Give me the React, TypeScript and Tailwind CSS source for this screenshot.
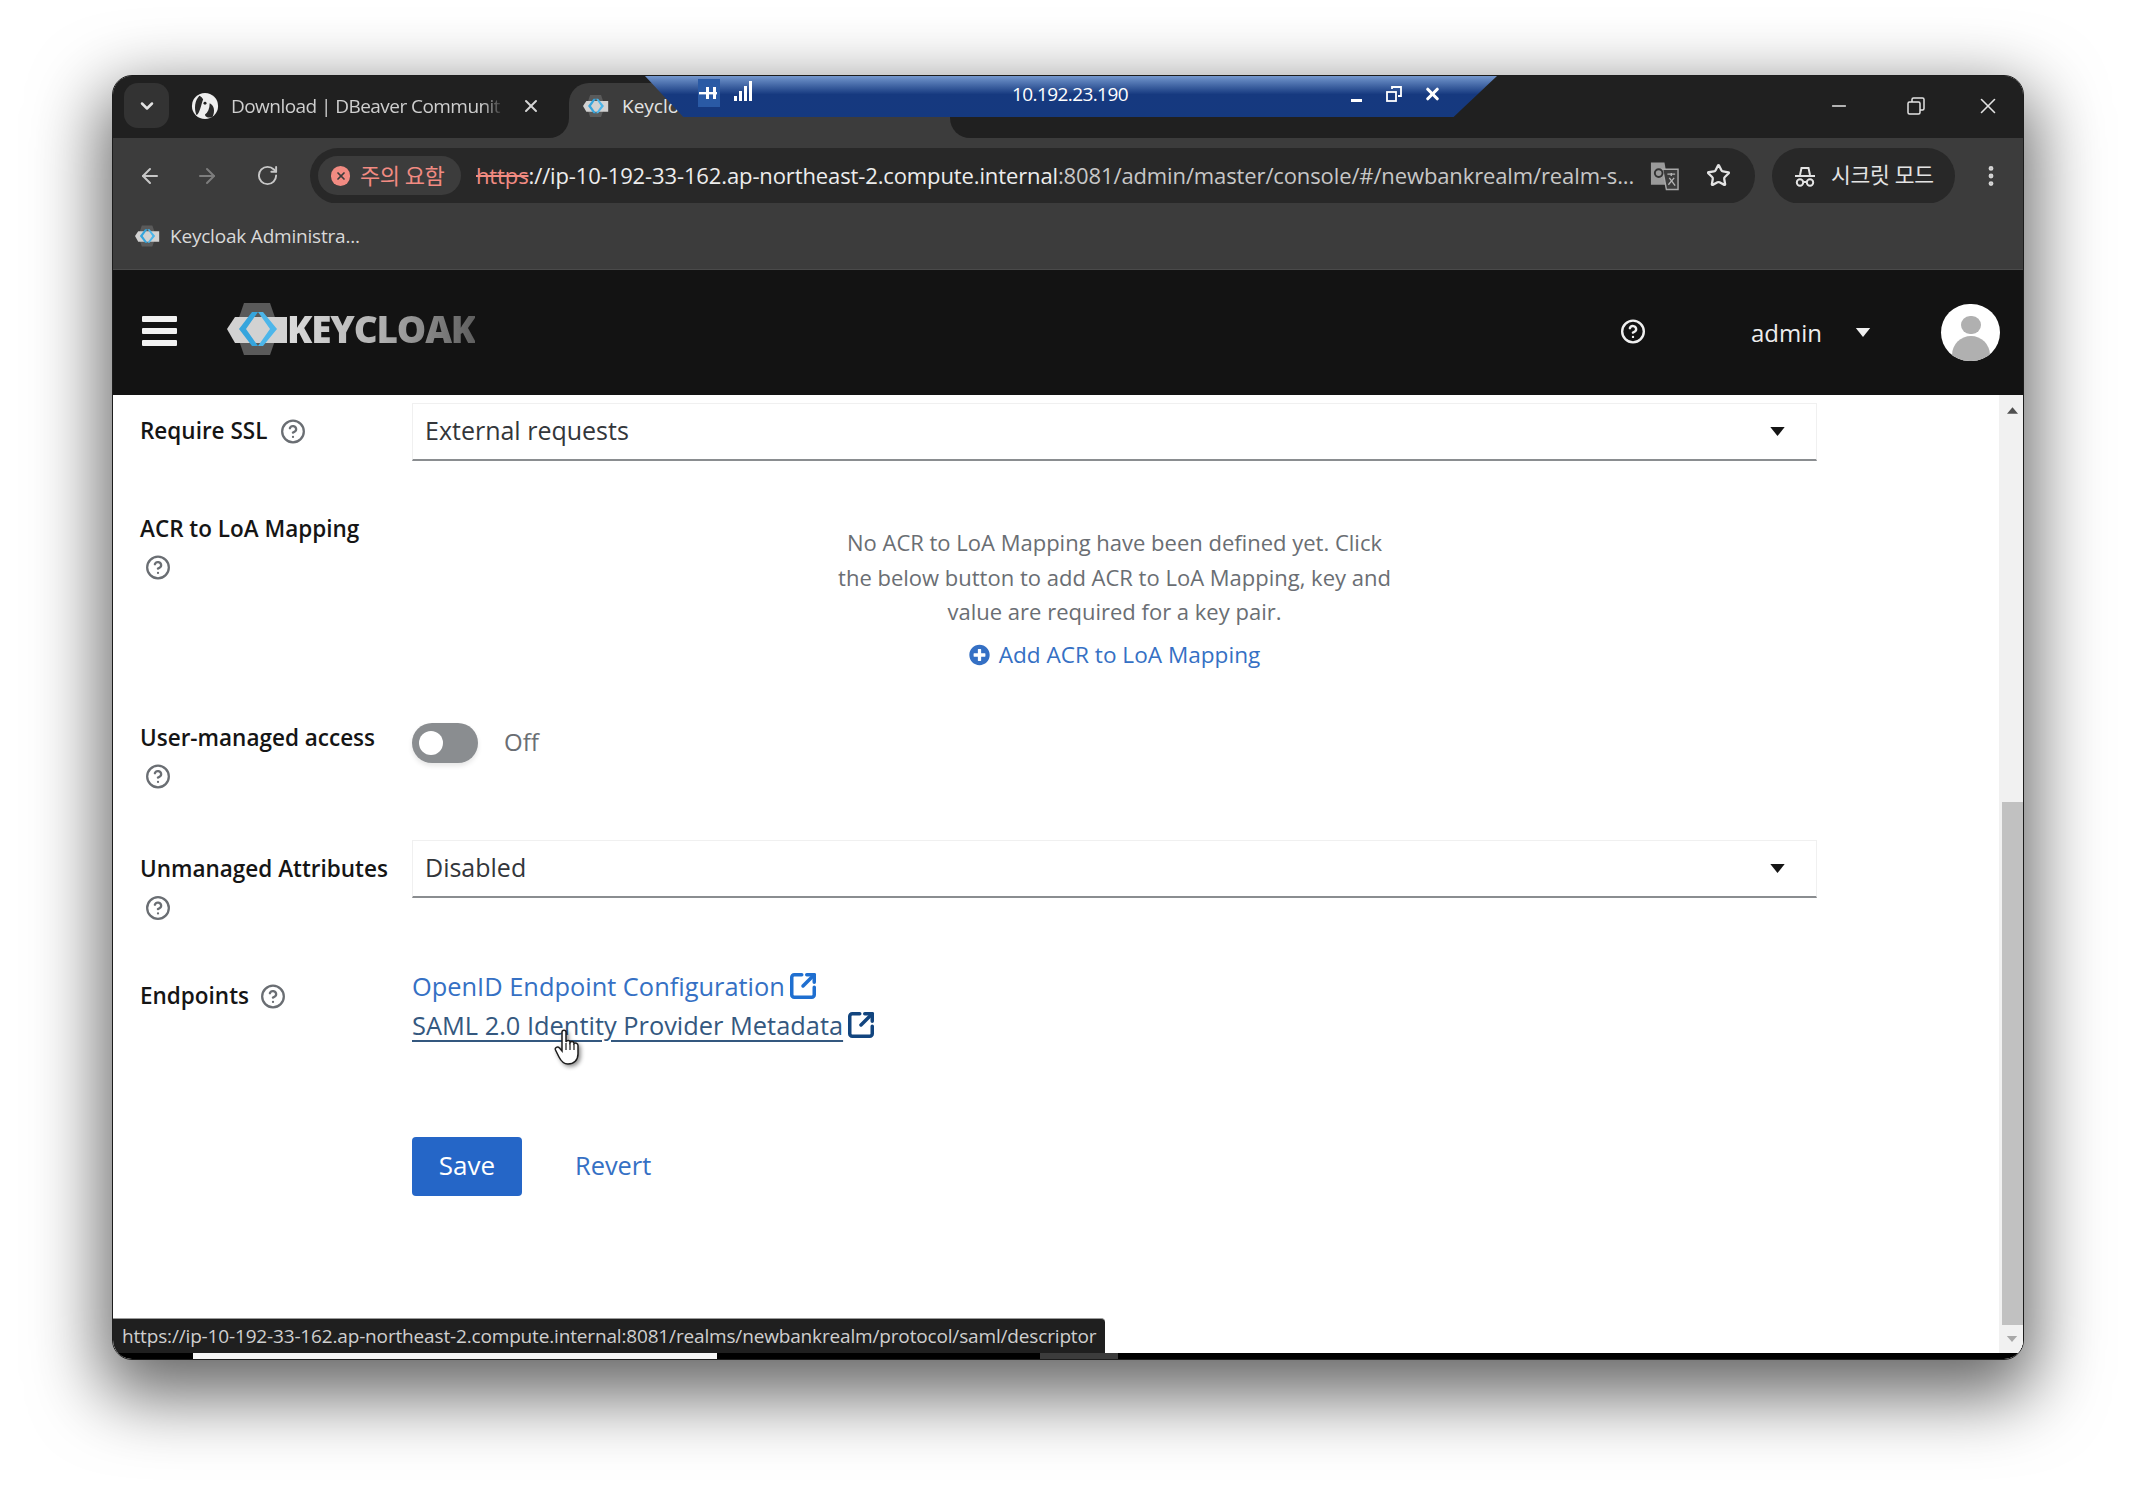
import React from "react";
import { ArrowLeft, ArrowRight, RotateCw, Star, EllipsisVertical, X, Minus, CircleHelp, SquareArrowOutUpRight, ChevronDown } from "lucide-react";
import { FaPlusCircle } from "react-icons/fa";

const CHROME = "font-['Open_Sans','Noto_Sans_CJK_KR',sans-serif]";
const PAGE = "font-['Open_Sans',sans-serif]";

function KeycloakMark({ className }: { className: string }) {
  return (
    <svg viewBox="0 0 62 52" className={className}>
      <polygon points="17,0 43,0 52,26 43,52 17,52 8,26" fill="#5a5a5a" />
      <polygon points="0,26 8,14 60,14 60,40 8,40" fill="#d2d2d2" />
      <path d="M25 9 L12 26 L25 43 L31 43 L19 26 L31 9 Z" fill="#35a5dd" />
      <path d="M36 9 L50 26 L36 43 L31 43 L43 26 L31 9 Z" fill="#4cb6ea" />
    </svg>
  );
}

function Caret({ className }: { className: string }) {
  return (
    <svg viewBox="0 0 16 10" className={className}>
      <polygon points="0,0 16,0 8,10" fill="currentColor" />
    </svg>
  );
}

function Help({ className = "" }: { className?: string }) {
  return <CircleHelp strokeWidth={2.1} className={`w-[26px] h-[29px] text-[#6a6e73] ${className}`} />;
}

function SelectBox({ value }: { value: string }) {
  return (
    <div className="w-[1405px] h-[58px] flex items-center justify-between pl-[12px] pr-[31px] border border-[#f0f0f0] border-b-2 border-b-[#8a8d90] bg-white">
      <span className="text-[25px] leading-[34px] -mt-[3px] text-[#33363a]">{value}</span>
      <Caret className="w-[15px] h-[9px] text-[#151515]" />
    </div>
  );
}

function Label({ text }: { text: string }) {
  return <span className="text-[22.5px] leading-[30px] font-semibold text-[#151515] whitespace-nowrap">{text}</span>;
}

function Incognito() {
  return (
    <svg viewBox="0 0 24 24" className="w-[24px] h-[26px] text-[#e3e3e3]" fill="none" stroke="currentColor" strokeWidth="2">
      <path d="M7 11 L8.5 4 H15.5 L17 11" />
      <path d="M2 12 H22" />
      <circle cx="7" cy="18.5" r="3.2" />
      <circle cx="17" cy="18.5" r="3.2" />
      <path d="M10.2 18 H13.8" />
    </svg>
  );
}

function Translate() {
  return (
    <svg viewBox="0 0 30 30" className="w-[29px] h-[30px]">
      <path d="M1 1 H15 L19 24 H1 Z" fill="#9a9a9a" />
      <path d="M13 8 H29 V29 H17 Z" fill="#3c3c3c" stroke="#a8a8a8" strokeWidth="1.5" />
      <circle cx="9" cy="12" r="4" fill="none" stroke="#333" strokeWidth="2" />
      <path d="M18 13 H26 M22 12 V15 M19 24 L25 17 M20 17 L26 25" stroke="#b5b5b5" strokeWidth="1.4" fill="none" />
    </svg>
  );
}

function DBeaverIcon() {
  return (
    <svg viewBox="0 0 30 30" className="w-[28px] h-[28px] shrink-0">
      <circle cx="15" cy="15" r="14" fill="#efefef" />
      <path d="M9 4 C4 9 3 18 6 25 C10 22 11 12 13 8 C12 6 11 5 9 4 Z" fill="#2a2a2a" />
      <path d="M20 12 C25 14 26 21 23 27 C19 28 15 27 15 24 C18 22 20 18 20 12 Z" fill="#2a2a2a" />
      <circle cx="15" cy="12" r="1.6" fill="#222" />
    </svg>
  );
}

function RdpBar() {
  return (
    <div className="absolute left-[532px] top-[0px] w-[852px] h-[41px] [clip-path:polygon(0_0,100%_0,94.9%_100%,4.5%_100%)] bg-gradient-to-b from-[#7598ce] via-[#16397f] via-45% to-[#15397f] flex items-center text-white">
      <div className="ml-[53px] w-[22px] h-[28px] bg-[#2a5aa5] flex items-center justify-center -mt-[8px]">
        <svg viewBox="0 0 20 16" className="w-[20px] h-[16px]" fill="#fff">
          <rect x="0" y="7" width="18" height="2.4" />
          <rect x="7" y="2" width="3" height="12" />
          <rect x="14" y="2" width="3" height="12" />
        </svg>
      </div>
      <svg viewBox="0 0 20 20" className="ml-[14px] w-[20px] h-[22px] -mt-[12px]" fill="#fff">
        <rect x="0" y="15" width="3" height="5" />
        <rect x="5" y="10" width="3" height="10" />
        <rect x="10" y="5" width="3" height="15" />
        <rect x="15" y="0" width="3" height="20" />
      </svg>
      <span className={`ml-[256px] w-[120px] text-center text-[19px] tracking-[-0.6px] -mt-[4px] ${CHROME}`}>10.192.23.190</span>
      <div className="ml-[221px] w-[11px] h-[3px] bg-white mt-[8px]" />
      <svg viewBox="0 0 16 16" className="ml-[24px] w-[16px] h-[18px] -mt-[6px]" fill="none" stroke="#fff" strokeWidth="1.8">
        <rect x="1" y="6" width="9" height="9" />
        <path d="M6 3 V1 H15 V10 H12" />
      </svg>
      <X className="ml-[21px] w-[19px] h-[20px] -mt-[6px]" strokeWidth={4} />
    </div>
  );
}

function HandCursor() {
  return (
    <svg viewBox="0 0 26 36" className="absolute left-[441px] top-[633px] w-[26px] h-[38px] drop-shadow-[2px_2px_2px_rgba(0,0,0,0.45)]">
      <path
        d="M8 3 C8 0.5 12 0.5 12 3 V13 C13 11 16 11 16 13.5 C17 12 20 12 20 14.5 C21 13.5 24 14 24 16.5 V25 C24 31 20 35 14 35 C9 35 7 32 5 28 L1.5 21 C0.5 18.5 3.5 17 5.5 19 L8 22 Z"
        fill="#fff"
        stroke="#1c1c1c"
        strokeWidth="1.5"
      />
      <path d="M12 14 V21 M16 14 V21 M20 15 V21" stroke="#1c1c1c" strokeWidth="1.2" />
    </svg>
  );
}

export default function App() {
  return (
    <div className="w-[2136px] h-[1508px] bg-white pt-[75px] pl-[112px] overflow-hidden">
      <div className="relative w-[1912px] h-[1285px] flex flex-col rounded-[20px] overflow-hidden border border-[#1c1c1c] bg-white shadow-[0_26px_70px_10px_rgba(0,0,0,0.6)]">

        {/* tab strip */}
        <div className={`flex h-[62px] shrink-0 bg-[#3c3c3c] ${CHROME}`}>
          <div className="w-[456px] bg-[#202020] rounded-br-[20px] flex pt-[7px] pl-[11px]">
            <div className="w-[45px] h-[45px] rounded-[14px] bg-[#333333] flex items-center justify-center">
              <ChevronDown className="w-[20px] h-[20px] text-[#e3e3e3]" strokeWidth={3} />
            </div>
            <div className="ml-[22px] h-[45px] flex items-center">
              <DBeaverIcon />
              <span className="ml-[12px] mt-[2px] w-[273px] whitespace-nowrap text-[19px] tracking-[-0.55px] text-[#cfcfcf] [mask-image:linear-gradient(to_right,black_92%,transparent)]">Download | DBeaver Communit</span>
              <X className="ml-[17px] w-[20px] h-[20px] text-[#d5d5d5]" strokeWidth={2.4} />
            </div>
          </div>
          <div className="w-[381px] bg-[#202020]">
            <div className="h-[55px] mt-[7px] rounded-t-[20px] bg-[#3c3c3c] flex items-start pt-[9px] pl-[14px]">
              <KeycloakMark className="w-[26px] h-[24px] mt-[2px]" />
              <span className="ml-[13px] text-[19px] text-[#e3e3e3]">Keycloak</span>
            </div>
          </div>
          <div className="flex-1 bg-[#202020] rounded-bl-[20px] flex justify-end">
            <div className="w-[75px] h-[62px] flex items-center justify-center pb-[2px] pr-[3px]">
              <Minus className="w-[22px] h-[22px] text-[#e3e3e3]" strokeWidth={1.6} />
            </div>
            <div className="w-[75px] h-[62px] flex items-center justify-center pb-[2px]">
              <svg viewBox="0 0 18 18" className="w-[18px] h-[18px]" fill="none" stroke="#e3e3e3" strokeWidth="1.5">
                <rect x="1" y="5" width="12" height="12" rx="1.5" />
                <path d="M5 5 V2.5 A1.5 1.5 0 0 1 6.5 1 H15.5 A1.5 1.5 0 0 1 17 2.5 V11.5 A1.5 1.5 0 0 1 15.5 13 H13" />
              </svg>
            </div>
            <div className="w-[70px] h-[62px] flex items-center justify-center pb-[2px]">
              <X className="w-[26px] h-[26px] text-[#e3e3e3]" strokeWidth={1.5} />
            </div>
          </div>
        </div>

        {/* toolbar */}
        <div className={`flex items-center h-[65px] pt-[10px] shrink-0 bg-[#3c3c3c] ${CHROME}`}>
          <ArrowLeft className="ml-[25px] w-[24px] h-[26px] text-[#c7c7c7]" strokeWidth={2} />
          <ArrowRight className="ml-[33px] w-[24px] h-[26px] text-[#7d7d7d]" strokeWidth={2} />
          <RotateCw className="ml-[37px] w-[23px] h-[25px] text-[#c7c7c7]" strokeWidth={2} />
          <div className="ml-[31px] w-[1445px] h-[56px] shrink-0 rounded-full bg-[#282828] flex items-center">
            <div className="ml-[8px] w-[143px] h-[39px] shrink-0 rounded-full bg-[#3c3c3c] flex items-center pl-[13px]">
              <div className="w-[19px] h-[20px] rounded-full bg-[#f28b82] flex items-center justify-center">
                <X className="w-[12px] h-[12px] text-[#3c3c3c]" strokeWidth={3.5} />
              </div>
              <span className="ml-[10px] text-[22px] text-[#f28b82] whitespace-nowrap tracking-[-0.5px]">주의 요함</span>
            </div>
            <span className="ml-[15px] w-[1160px] shrink-0 whitespace-nowrap text-[22px] tracking-[-0.12px] text-[#c7c7c7]">
              <span className="text-[#f28b82] line-through">https</span>
              <span className="text-[#ededed]">://ip-10-192-33-162.ap-northeast-2.compute.internal</span>
              :8081/admin/master/console/#/newbankrealm/realm-s...
            </span>
            <span className="ml-[14px]"><Translate /></span>
            <Star className="ml-[27px] w-[25px] h-[27px] text-[#e3e3e3]" strokeWidth={2.2} />
          </div>
          <div className="ml-[17px] w-[183px] h-[56px] shrink-0 rounded-full bg-[#282828] flex items-center pl-[21px]">
            <Incognito />
            <span className="ml-[14px] text-[21.5px] text-[#e3e3e3] whitespace-nowrap tracking-[-0.3px]">시크릿 모드</span>
          </div>
          <EllipsisVertical className="ml-[23px] w-[26px] h-[28px] text-[#d5d5d5]" strokeWidth={2.5} />
        </div>

        {/* bookmarks */}
        <div className={`flex items-center h-[67px] shrink-0 bg-[#3c3c3c] border-b border-[#4a4a4a] pl-[22px] ${CHROME}`}>
          <KeycloakMark className="w-[25px] h-[22px]" />
          <span className="ml-[10px] text-[19px] tracking-[-0.2px] text-[#d9d9d9]">Keycloak Administra...</span>
        </div>

        {/* keycloak masthead */}
        <div className={`flex items-center h-[125px] shrink-0 bg-[#131313] pr-[23px] ${PAGE}`}>
          <div className="ml-[29px] w-[35px] h-[30px] flex flex-col justify-between -mt-[4px]">
            <div className="h-[6px] rounded-[1px] bg-[#f2f2f2]" />
            <div className="h-[6px] rounded-[1px] bg-[#f2f2f2]" />
            <div className="h-[6px] rounded-[1px] bg-[#f2f2f2]" />
          </div>
          <KeycloakMark className="ml-[50px] w-[62px] h-[52px] -mt-[8px]" />
          <span className="-ml-[2px] -mt-[8px] text-[37px] leading-[36px] font-extrabold tracking-[-1.2px] bg-gradient-to-r from-[#dcdcdc] via-[#b0b0b0] to-[#5f5f5f] bg-clip-text text-transparent">KEYCLOAK</span>
          <CircleHelp className="ml-auto -mt-[2px] w-[26px] h-[29px] text-[#f0f0f0]" strokeWidth={2.2} />
          <span className="ml-[105px] text-[24px] text-[#ededed]">admin</span>
          <Caret className="ml-[33px] w-[16px] h-[9px] text-[#f0f0f0]" />
          <div className="ml-[70px] w-[59px] h-[57px] rounded-full bg-white overflow-hidden flex flex-col items-center">
            <div className="mt-[12px] w-[20px] h-[22px] rounded-full bg-[#b0b0b0]" />
            <div className="mt-[2px] w-[38px] h-[30px] rounded-t-[20px] bg-[#b0b0b0]" />
          </div>
        </div>

        {/* content */}
        <div className={`relative flex h-[958px] shrink-0 bg-white ${PAGE}`}>
          <main className="flex-1 pl-[27px] pt-[8px]">
            <div className="flex h-[58px]">
              <div className="w-[272px] pt-[13px] flex items-start gap-[13px]">
                <Label text="Require SSL" />
                <Help className="mt-[1px]" />
              </div>
              <SelectBox value="External requests" />
            </div>

            <div className="flex mt-[53px] h-[162px]">
              <div className="w-[272px] flex flex-col items-start">
                <Label text="ACR to LoA Mapping" />
                <Help className="mt-[9px] ml-[5px]" />
              </div>
              <div className="w-[1405px] pt-[11px] flex flex-col items-center">
                <p className="text-center text-[22px] leading-[34.7px] text-[#6a6e73] whitespace-nowrap">
                  No ACR to LoA Mapping have been defined yet. Click
                  <br />
                  the below button to add ACR to LoA Mapping, key and
                  <br />
                  value are required for a key pair.
                </p>
                <div className="mt-[11px] flex items-center text-[22.6px] leading-[30px] text-[#3570c4]">
                  <FaPlusCircle className="w-[21px] h-[22px] mr-[9px]" />
                  Add ACR to LoA Mapping
                </div>
              </div>
            </div>

            <div className="flex mt-[47px] h-[70px]">
              <div className="w-[272px] flex flex-col items-start">
                <Label text="User-managed access" />
                <Help className="mt-[9px] ml-[5px]" />
              </div>
              <div className="flex items-start">
                <div className="w-[66px] h-[40px] rounded-full bg-[#8a8d90] flex items-center pl-[7px] shadow-[0_3px_5px_rgba(0,0,0,0.1)]">
                  <div className="w-[24px] h-[24px] rounded-full bg-white" />
                </div>
                <span className="ml-[26px] mt-[1px] text-[24px] text-[#6a6e73]">Off</span>
              </div>
            </div>

            <div className="flex mt-[47px] h-[82px]">
              <div className="w-[272px] pt-[14px] flex flex-col items-start">
                <Label text="Unmanaged Attributes" />
                <Help className="mt-[10px] ml-[5px]" />
              </div>
              <SelectBox value="Disabled" />
            </div>

            <div className="flex mt-[44px] h-[80px]">
              <div className="w-[272px] pt-[15px] flex items-start gap-[11px]">
                <Label text="Endpoints" />
                <Help className="mt-[1px]" />
              </div>
              <div className="flex flex-col text-[25.4px] leading-[40px] text-[#3570c4]">
                <div className="flex items-center">
                  OpenID Endpoint Configuration
                  <SquareArrowOutUpRight className="ml-[3px] w-[30px] h-[32px] text-[#1f6fd0]" strokeWidth={2.8} />
                </div>
                <div className="flex items-center text-[#34587f] -mt-[1px]">
                  <span className="underline underline-offset-[5px]">SAML 2.0 Identity Provider Metadata</span>
                  <SquareArrowOutUpRight className="ml-[3px] w-[30px] h-[32px] text-[#12457f]" strokeWidth={2.8} />
                </div>
              </div>
            </div>

            <div className="flex mt-[91px] ml-[272px] items-center">
              <button className="w-[110px] h-[59px] pb-[2px] rounded-[4px] bg-[#2566c7] text-white text-[26px]">Save</button>
              <span className="ml-[53px] -mt-[2px] text-[25.4px] text-[#3570c4]">Revert</span>
            </div>
          </main>

          <aside className="w-[24px] h-full flex flex-col bg-[#f1f1f1] shrink-0">
            <div className="h-[30px] flex items-center justify-center pl-[2px]">
              <svg viewBox="0 0 12 7" className="w-[11px] h-[7px]"><polygon points="6,0 12,7 0,7" fill="#505050" /></svg>
            </div>
            <div className="flex-1" />
            <div className="ml-[3px] h-[523px] bg-[#c1c1c1]" />
            <div className="h-[28px] flex items-center justify-center pl-[2px]">
              <svg viewBox="0 0 12 7" className="w-[12px] h-[6px]"><polygon points="0,0 12,0 6,7" fill="#a8a8a8" /></svg>
            </div>
          </aside>

          <HandCursor />
        </div>

        {/* bottom strip */}
        <div className="flex h-[6px] shrink-0 bg-black">
          <div className="ml-[80px] w-[524px] bg-[#f5f5f5]" />
          <div className="ml-[323px] w-[78px] bg-[#3c3c3c]" />
        </div>

        {/* link status bubble */}
        <div className={`absolute left-0 bottom-[6px] w-[992px] h-[35px] bg-[#1f1f1f] border-t border-[#9a9a9a] rounded-tr-[4px] flex items-center pl-[9px] text-[19px] text-[#cfcfcf] whitespace-nowrap tracking-[-0.16px] ${CHROME}`}>
          https://ip-10-192-33-162.ap-northeast-2.compute.internal:8081/realms/newbankrealm/protocol/saml/descriptor
        </div>

        <RdpBar />
      </div>
    </div>
  );
}
